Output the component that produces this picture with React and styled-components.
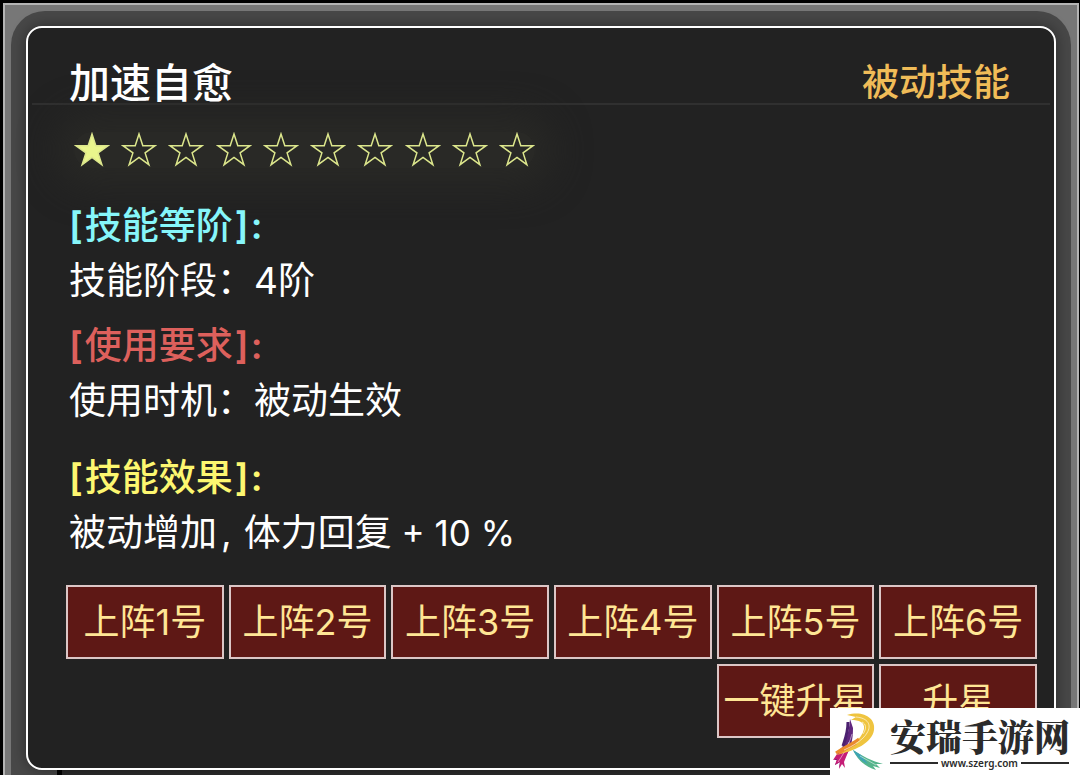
import React from 'react'
import styled, { createGlobalStyle } from 'styled-components'

const GlobalStyle = createGlobalStyle`
  * {
    box-sizing: border-box;
  }

  body {
    margin: 0;
    background-color: #000;
    font-family: Inter, 'Noto Sans CJK SC', sans-serif;
  }
`

const Page = styled.main`
  position: relative;
  height: 100vh;
  overflow: hidden;
  padding: 3px 1px 0 3px;
`

const Frame = styled.div`
  min-height: 100%;
  padding: 6px 6px 0;
  border: 2px solid #b4b4b4;
  border-bottom: 0;
  background-color: #777;
`

const Bezel = styled.div`
  padding: 15px 15px 0;
  border-radius: 34px 34px 0 0;
  background-color: #484848;
`

const Card = styled.section`
  position: relative;
  padding-bottom: 30px;
  border: 2px solid #fff;
  border-radius: 16px;
  background-color: #222;
  box-shadow: 0 0 15px rgba(0, 0, 0, 0.4);
`

const Header = styled.header`
  display: flex;
  align-items: center;
  justify-content: space-between;
  margin: 0 4px;
  padding: 35px 40px 0 37px;
  border-bottom: 2px solid #303030;
`

const Title = styled.h1`
  margin: 0;
  color: #fff;
  font-size: 41px;
  font-weight: 500;
  line-height: 40px;
`

const Kind = styled.span`
  color: #f0bc58;
  font-size: 37px;
  font-weight: 500;
  line-height: 40px;
`

const Body = styled.div`
  padding: 27px 41px 24px;
`

const StarRow = styled.div`
  display: flex;
  justify-content: space-between;
  width: 461px;
  margin: 0 5px 30px;
  border-radius: 20px;
  background-color: #292926;
  box-shadow: 0 0 36px 18px #292926;
`

const StarIcon = styled.svg`
  width: 36px;
  height: 36px;
  fill: ${({ $filled }) => ($filled ? '#e9f58c' : 'none')};
  stroke: #dce68c;
  stroke-width: 1.5;
`

const Block = styled.section`
  position: relative;
  margin-bottom: ${({ $gap }) => $gap || 0}px;
`

const Heading = styled.h2`
  display: flex;
  gap: 2px;
  margin: 0;
  color: ${({ $color }) => $color};
  font-size: 37px;
  font-weight: 500;
  line-height: 55px;
`

const Bracket = styled.span`
  font-weight: 600;
`

const Text = styled.p`
  margin: 0;
  color: #fff;
  font-size: 37px;
  font-weight: 400;
  line-height: 55px;
`

const Comma = styled.span`
  padding: 0 12px 0 4px;
`

const Gain = styled.span`
  font-size: 35px;
`

const Actions = styled.div`
  display: grid;
  grid-template-columns: repeat(6, 1fr);
  gap: 5px;
  padding: 0 17px 0 38px;
`

const ActionButton = styled.button`
  grid-column-start: ${({ $column }) => $column || 'auto'};
  height: 74px;
  padding: 0;
  border: 2px solid #dcc6c6;
  background-color: #5e1815;
  color: #ffe695;
  font-family: inherit;
  font-size: 36px;
  line-height: 40px;
  white-space: nowrap;
  cursor: pointer;
`

const NextPanel = styled.div`
  height: 40px;
  margin-left: 31px;
  border-left: 5px solid #000;
  background-color: #2b2b2b;
`

const Watermark = styled.aside`
  position: absolute;
  right: 0;
  bottom: 0;
  display: flex;
  align-items: center;
  width: 250px;
  height: 67px;
  background-color: #fff;
`

const Mark = styled.svg`
  flex: none;
  width: 60px;
  height: 67px;
`

const Brand = styled.div`
  flex: 1;
  color: #2b2b2b;
`

const BrandName = styled.div`
  font-family: 'Noto Serif CJK SC', 'Noto Sans CJK SC', serif;
  font-size: 36px;
  font-weight: 900;
  line-height: 42px;
  white-space: nowrap;
`

const BrandUrl = styled.div`
  display: flex;
  align-items: center;
  gap: 3px;
  margin-right: 11px;
  font-family: 'Noto Sans', sans-serif;
  font-size: 10px;
  font-weight: 600;
  line-height: 12px;

  &::before,
  &::after {
    content: '';
    flex: 1;
    height: 2px;
    background-color: #2b2b2b;
  }
`

const Star = ({ filled }) => (
  <StarIcon $filled={filled} viewBox="0 0 36 36" aria-hidden="true">
    <path d="M18 2l3.8 11.7h12.3l-10 7.2 3.8 11.8L18 25.4l-9.9 7.3 3.8-11.8-10-7.2h12.3z" />
  </StarIcon>
)

const Stars = ({ level, total }) => (
  <StarRow role="img" aria-label={`${level}/${total}`}>
    {Array.from({ length: total }, (_, i) => (
      <Star key={i} filled={i < level} />
    ))}
  </StarRow>
)

const SectionTitle = ({ color, children }) => (
  <Heading $color={color}>
    <Bracket>[</Bracket>
    <span>{children}</span>
    <Bracket>]</Bracket>
    <Bracket>:</Bracket>
  </Heading>
)

const BrandMark = () => (
  <Mark viewBox="0 0 60 67" fill="none" aria-hidden="true">
    {/* stem */}
    <path d="M20 11L23 20C23 32 21 38 18 44L9 60L10 54L5 57L7 52L4 52C13 40 19 28 20 11Z" fill="#60277f" />
    <path d="M11 40L21 37L14 54L15 60L12 56L9 61L10 54L5 57L7 51L3 52Z" fill="#c51d76" />
    <path d="M18 14C18 25 15 32 13 38" stroke="#4b206f" strokeWidth="3" />
    <path d="M19 34C16 42 12 48 8 54M22 26C20 34 17 39 14 45" stroke="#fff" strokeWidth="0.5" />
    {/* bowl */}
    <path d="M17 7C33 2 46 10 44 22C42 35 25 43 6 47C20 40 32 31 34 21C35 14 29 12 21 12L26 9Z" fill="#efc43f" />
    <path d="M29 31C21 37 13 40 6 45M26 35C19 39 14 42 9 45" stroke="#ea8b2d" strokeWidth="3" />
    <path d="M26 9C38 10 42 17 37 25C33 32 23 38 14 42M32 14C36 16 37 20 33 26" stroke="#fff" strokeWidth="0.6" />
    {/* leg */}
    <path d="M23 42C32 48 42 53 53 56L46 56L50 60L43 58L46 62C36 59 28 53 23 42Z" fill="#55b48c" />
    <path d="M23 42L31 47L38 56C31 53 26 48 23 42Z" fill="#3da4b4" />
    <path d="M30 48L46 57" stroke="#fff" strokeWidth="0.5" />
  </Mark>
)

const actions = [
  { label: '上阵1号' },
  { label: '上阵2号' },
  { label: '上阵3号' },
  { label: '上阵4号' },
  { label: '上阵5号' },
  { label: '上阵6号' },
  { label: '一键升星', column: 5 },
  { label: '升星', column: 6 },
]

const App = () => (
  <>
    <GlobalStyle />
    <Page>
      <Frame>
        <Bezel>
          <Card>
            <Header>
              <Title>加速自愈</Title>
              <Kind>被动技能</Kind>
            </Header>

            <Body>
              <Stars level={1} total={10} />
              <Block $gap={10}>
                <SectionTitle color="#86f6fa">技能等阶</SectionTitle>
                <Text>技能阶段：4阶</Text>
              </Block>
              <Block $gap={22}>
                <SectionTitle color="#dd605c">使用要求</SectionTitle>
                <Text>使用时机：被动生效</Text>
              </Block>
              <Block>
                <SectionTitle color="#fdf770">技能效果</SectionTitle>
                <Text>
                  被动增加<Comma>,</Comma>体力回复<Gain> + 10 %</Gain>
                </Text>
              </Block>
            </Body>

            <Actions>
              {actions.map(({ label, column }) => (
                <ActionButton key={label} type="button" $column={column}>
                  {label}
                </ActionButton>
              ))}
            </Actions>
          </Card>
          <NextPanel />
        </Bezel>
      </Frame>

      <Watermark>
        <BrandMark />
        <Brand>
          <BrandName>安瑞手游网</BrandName>
          <BrandUrl>www.szerg.com</BrandUrl>
        </Brand>
      </Watermark>
    </Page>
  </>
)

export default App
